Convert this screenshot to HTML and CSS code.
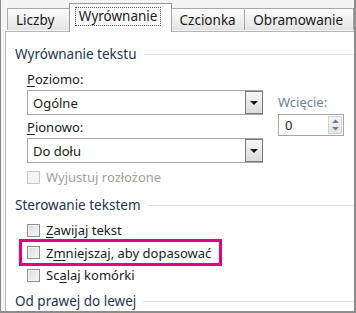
FILE: index.html
```html
<!DOCTYPE html>
<html lang="pl">
<head>
  <meta charset="UTF-8">
  <title>Formatowanie komórek</title>
  <link rel="stylesheet" href="styles.css">
</head>
<body>
  <div class="dialog">
    <!-- Tab strip -->
    <div class="tabs">
      <div class="tab">Liczby</div>
      <div class="tab active"><span class="focus">Wyrównanie</span></div>
      <div class="tab">Czcionka</div>
      <div class="tab">Obramowanie</div>
    </div>

    <div class="panel">
      <!-- Text alignment -->
      <div class="group-title"><span>Wyrównanie tekstu</span></div>
      <div class="align-row">
        <div class="align-left">
          <div class="label"><u>P</u>oziomo:</div>
          <div class="select">
            <span class="value">Ogólne</span>
            <span class="drop"><i class="arrow"></i></span>
          </div>
          <div class="label"><u>P</u>ionowo:</div>
          <div class="select">
            <span class="value">Do dołu</span>
            <span class="drop"><i class="arrow"></i></span>
          </div>
        </div>
        <div class="align-right">
          <div class="label muted">Wcięcie:</div>
          <div class="spin">
            <span class="value">0</span>
            <span class="spin-btns">
              <svg width="11" height="16" viewBox="0 0 11 16">
                <path d="M2 6 L5.5 2.5 L9 6 Z" fill="#5d7db3"/>
                <path d="M2 10 L5.5 13.5 L9 10 Z" fill="#5d7db3"/>
              </svg>
            </span>
          </div>
        </div>
      </div>
      <label class="check disabled"><i class="box"></i>Wyjustuj rozłożone</label>

      <!-- Text control -->
      <div class="group-title"><span>Sterowanie tekstem</span></div>
      <div class="checks">
        <label class="check"><i class="box"></i><span><u>Z</u>awijaj tekst</span></label>
        <label class="check highlight"><i class="box"></i><span>Z<u>m</u>niejszaj, aby dopasować</span></label>
        <label class="check"><i class="box"></i><span>Sc<u>a</u>laj komórki</span></label>
      </div>

      <!-- Right to left -->
      <div class="group-title"><span>Od prawej do lewej</span></div>
    </div>
  </div>
</body>
</html>
```

FILE: styles.css
```css
/* Reset */
* {
  margin: 0;
  padding: 0;
  box-sizing: border-box;
}

body {
  width: 356px;
  height: 313px;
  overflow: hidden;
  font-family: 'Noto Sans', 'Open Sans', sans-serif;
  font-size: 13px;
  color: #1b1b1b;
  background: #fff;
}

u {
  text-decoration-thickness: 1px;
  text-underline-offset: 2px;
}

/* Dialog frame */
.dialog {
  width: 356px;
  height: 313px;
  background: #f4f4f4;
  border-left: 1px solid #8c8c8c;
  border-right: 2px solid #8c8c8c;
  border-bottom: 2px solid #8c8c8c;
  display: flex;
  flex-direction: column;
}

/* Tabs */
.tabs {
  height: 34px;
  display: flex;
  align-items: flex-end;
  padding-left: 6px;
  position: relative;
  z-index: 1;
}

.tab {
  height: 22px;
  padding: 0 8px;
  border: 1px solid #a9a9a9;
  border-bottom: none;
  background: linear-gradient(#fdfdfd, #e3e3e3);
  display: flex;
  align-items: center;
  margin-bottom: 1px;
  font-size: 13.5px;
}

.tab + .tab {
  margin-left: -1px;
}

.tab.active {
  height: 29px;
  margin-bottom: -1px;
  background: #fff;
  padding: 0 5px 4px;
  border-color: #9c9c9c;
}

.tab.active .focus {
  border: 1px dotted #555;
  padding: 0 3px;
  line-height: 17px;
}

.tab:nth-child(1) { width: 63px; }
.tab:nth-child(2) { width: 103px; }
.tab:nth-child(3) { width: 75px; }
.tab:nth-child(4) { width: 110px; }

/* Panel */
.panel {
  flex: 1;
  background: #fff;
  margin-left: 4px;
  border: 1px solid #b6b6b6;
  border-right: none;
  border-bottom: none;
  padding: 12px 0 0 9px;
}

.group-title {
  display: flex;
  align-items: center;
  color: #1e3553;
  font-size: 13.5px;
  height: 20px;
}

.group-title::after {
  content: "";
  flex: 1;
  height: 1px;
  background: #d8e1e8;
  margin-left: 7px;
}

.align-row {
  display: flex;
  padding-left: 12px;
  margin-top: 6px;
}

.align-left {
  width: 236px;
}

.align-right {
  margin-left: 15px;
  padding-top: 23px;
}

.label {
  height: 19px;
  line-height: 19px;
  margin-bottom: 1px;
}

.label.muted {
  color: #6c7f9c;
  margin-bottom: 2px;
}

.select {
  height: 25px;
  border: 1px solid #a6a6a6;
  display: flex;
  align-items: center;
  margin-bottom: 3px;
}

.select .value {
  flex: 1;
  padding-left: 5px;
}

.drop {
  width: 18px;
  height: 23px;
  border: 1px solid #7a7a7a;
  margin-right: -1px;
  background: linear-gradient(#f5f5f5, #dcdcdc);
  display: flex;
  align-items: center;
  justify-content: center;
}

.arrow {
  width: 0;
  height: 0;
  border-left: 4px solid transparent;
  border-right: 4px solid transparent;
  border-top: 4px solid #111;
}

.spin {
  width: 66px;
  height: 22px;
  border: 1px solid #a6a6a6;
  display: flex;
  align-items: center;
}

.spin .value {
  flex: 1;
  padding-left: 6px;
}

.spin-btns {
  width: 14px;
  height: 18px;
  margin-right: 1px;
  border: 1px solid #d2d2d2;
  background: linear-gradient(#f6f6f6, #e4e4e4);
  display: flex;
  align-items: center;
  justify-content: center;
}

/* Checkboxes */
.check {
  display: flex;
  align-items: center;
  height: 18px;
  margin-left: 12px;
}

.check .box {
  width: 13px;
  height: 13px;
  border: 1px solid #8e8f8f;
  background: linear-gradient(135deg, #dcdcdc, #f6f6f6);
  box-shadow: inset 0 0 0 1px #f2f2f2;
  margin-right: 6px;
}

.check.disabled {
  height: 22px;
  color: #a0a0a0;
  margin-bottom: 7px;
}

.check.disabled .box {
  border-color: #c8c8c8;
  background: #f4f4f4;
}

.checks {
  padding: 6px 0 7px;
}

.check.highlight {
  width: 203px;
  height: 27px;
  margin-left: 4px;
  padding-left: 5px;
  border: 3px solid #e5007d;
}
```
